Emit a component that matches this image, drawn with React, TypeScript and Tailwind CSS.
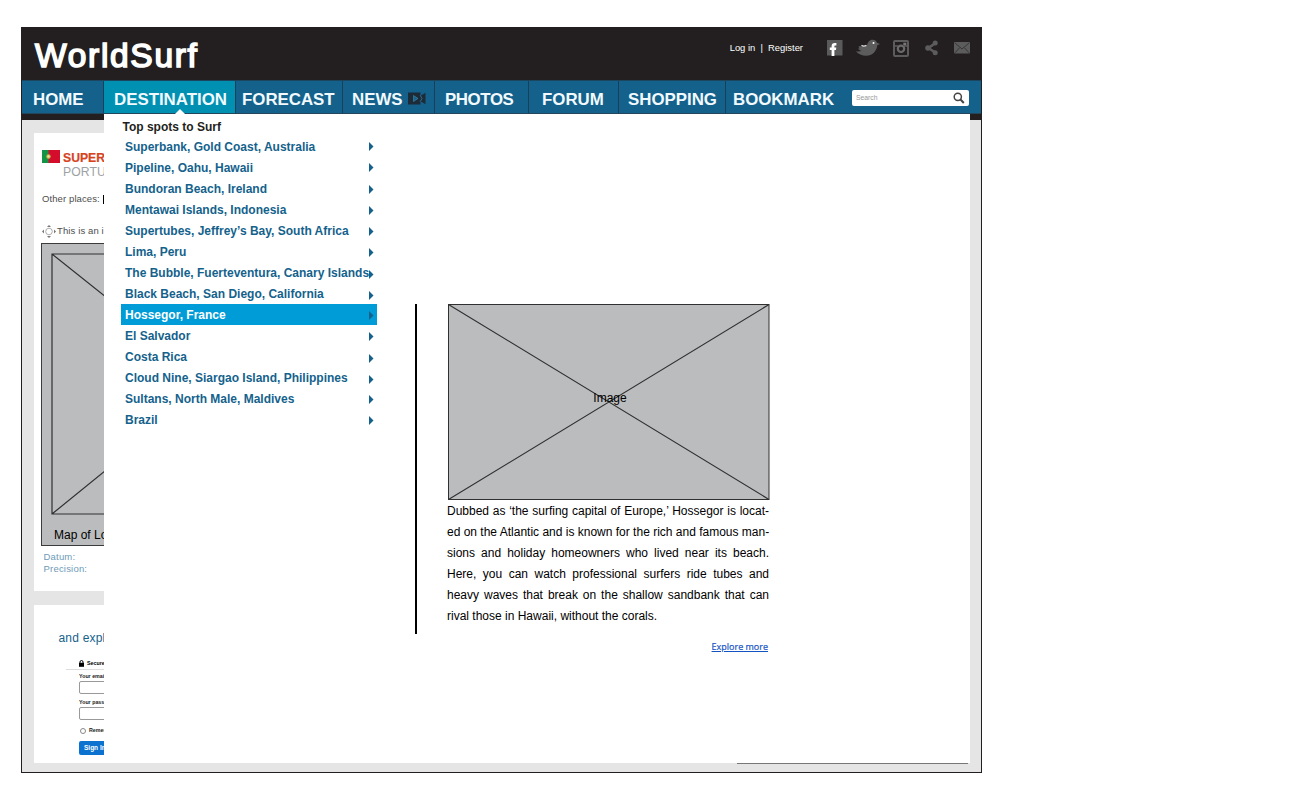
import React from "react";

type Spot = { name: string; active?: boolean; drop: string };

const spots: Spot[] = [
  { name: "Superbank, Gold Coast, Australia", drop: "mt-0" },
  { name: "Pipeline, Oahu, Hawaii", drop: "mt-0" },
  { name: "Bundoran Beach, Ireland", drop: "mt-px" },
  { name: "Mentawai Islands, Indonesia", drop: "mt-px" },
  { name: "Supertubes, Jeffrey’s Bay, South Africa", drop: "mt-px" },
  { name: "Lima, Peru", drop: "mt-[2px]" },
  { name: "The Bubble, Fuerteventura, Canary Islands", drop: "mt-[4px]" },
  { name: "Black Beach, San Diego, California", drop: "mt-[4px]" },
  { name: "Hossegor, France", active: true, drop: "mt-px" },
  { name: "El Salvador", drop: "mt-px" },
  { name: "Costa Rica", drop: "mt-[3px]" },
  { name: "Cloud Nine, Siargao Island, Philippines", drop: "mt-[3px]" },
  { name: "Sultans, North Male, Maldives", drop: "mt-[2px]" },
  { name: "Brazil", drop: "mt-[2px]" },
];

const story = [
  "Dubbed as ‘the surfing capital of Europe,’ Hossegor is locat-",
  "ed on the Atlantic and is known for the rich and famous man-",
  "sions and holiday homeowners who lived near its beach.",
  "Here, you can watch professional surfers ride tubes and",
  "heavy waves that break on the shallow sandbank that can",
];

function SocialIcons() {
  return (
    <div className="flex items-center">
      <svg className="h-4 w-4" viewBox="0 0 16 16">
        <rect width="15.5" height="15.5" fill="#5b5a5b" />
        <path d="M4.600 16V9.900H2.800V7.600h1.800V6.300c0-2.200 1.200-3.200 3.100-3.200h1.700v2.400H8.300c-.7 0-.9.3-.9.900v1.200h1.900L9 9.900H7.400V16z" fill="#fff" />
      </svg>
      <svg className="ml-[13px] h-[18px] w-[24px]" viewBox="0 0 24 18">
        <path d="M0 12.2c2.2.7 4.1.5 5.6-.4C3.9 11.5 2.600 10.700 2 9.500h1.600C2.900 8.600 2.600 7.800 2.600 7c2.900.4 5.600.3 8.500-.6C11.500 3.400 13.500.8 16.600.8c2.200 0 3.700 1.200 4.500 3L24 5.100l-2.700 1.100C20.800 12 16.500 16.700 10.200 16.700 6 16.700 2.200 15 0 12.200z" fill="#5d5c5d" />
        <path d="M5.500 6.300q2 1.500 5 0" stroke="#ddd" strokeWidth="1.300" fill="none" />
        <circle cx="17.500" cy="4" r="1" fill="#fff" />
      </svg>
      <svg className="ml-[13px] h-[17px] w-4" viewBox="0 0 16 17">
        <rect x="1" y="1" width="14" height="15" rx="1" fill="none" stroke="#5d5c5d" strokeWidth="2" />
        <path d="M1 6h4M11 6h4" stroke="#5d5c5d" strokeWidth="1.500" />
        <rect x="10.300" y="2.700" width="3" height="2.500" fill="#777" />
        <circle cx="8" cy="8.800" r="3.200" fill="none" stroke="#6b6a6b" strokeWidth="2.200" />
      </svg>
      <svg className="ml-4 h-4 w-[13px]" viewBox="0 0 13 16">
        <path d="M10.500 3L3.500 8l7 4.800" stroke="#5d5c5d" strokeWidth="2.600" fill="none" />
        <circle cx="10.200" cy="3" r="2.500" fill="#5d5c5d" />
        <circle cx="2.900" cy="8" r="2.700" fill="#5d5c5d" />
        <circle cx="10.200" cy="12.800" r="2.500" fill="#5d5c5d" />
      </svg>
      <svg className="ml-4 h-[12px] w-[16px]" viewBox="0 0 16 12">
        <rect width="16" height="11.500" rx="1" fill="#5d5c5d" />
        <path d="M1 1l7 6 7-6M1 10.800l4.500-5M15 10.800l-4.500-5" stroke="#333133" strokeWidth=".9" fill="none" />
      </svg>
    </div>
  );
}

function NavItem({ label, width, pad, active, children }: { label: string; width: string; pad: string; active?: boolean; children?: React.ReactNode }) {
  return (
    <div className={`flex h-full shrink-0 items-center whitespace-nowrap border-r border-[#1a3f58] pt-[6px] text-[16.85px] font-bold leading-none text-[#f2faff] ${width} ${pad} ${active ? "bg-[#0090b2]" : ""}`}>
      {label}
      {children}
    </div>
  );
}

function VideoIcon() {
  return (
    <svg className="-mt-[3px] ml-[5px] h-[13px] w-[19px]" viewBox="0 0 19 13">
      <path d="M0 .5h12.500v3.200L17.500.8v11.400l-5-3v3.300H0z" fill="#1d2b39" />
      <path d="M5.500 3.500l4.500 3-4.500 3z" fill="#14628c" stroke="#458baa" strokeWidth=".6" />
      <path d="M12.200 3.200l1.800 3.300M12.200 9.500l1.800-3" stroke="#3a7d9c" strokeWidth=".8" />
    </svg>
  );
}

function Sidebar() {
  return (
    <aside className="ml-[12px] flex w-[70px] flex-col overflow-hidden whitespace-nowrap pt-[13px]">
      <section className="h-[458px] bg-white pl-[8px] pt-[17px]">
        <div className="flex">
          <svg className="mr-[3px] h-[13px] w-[18px] shrink-0" viewBox="0 0 18 13">
            <rect width="18" height="13" fill="#d40d2c" />
            <rect width="6.500" height="13" fill="#159447" />
            <circle cx="6.500" cy="6.500" r="2.200" fill="#c9bd43" />
            <circle cx="6.500" cy="6.500" r="1" fill="#e9e3df" />
          </svg>
          <div className="text-[12.200px] leading-[13px]">
            <div className="pt-[2px] font-bold text-[#d6431f] [-webkit-text-stroke:0.2px_#d6431f]">SUPER</div>
            <div className="pt-px tracking-[0.100px] text-[#9da1a4]">PORTU</div>
          </div>
        </div>
        <div className="mt-[13px] flex h-[14px] items-center text-[9.500px] tracking-[0.100px] text-[#4d4d4d]">
          Other places:
          <span className="ml-[3px] h-[9px] w-[3px] shrink-0 bg-black" />
        </div>
        <div className="mt-[18px] flex h-[14px] items-center text-[9.500px] tracking-[0.120px] text-[#4d4d4d]">
          <svg className="mr-px h-[13px] w-[14px] shrink-0" viewBox="0 0 14 13">
            <circle cx="7" cy="6.500" r="3.300" fill="none" stroke="#999" strokeWidth=".8" />
            <path d="M5 2l2-2 2 2zM5 11l2 2 2-2zM2 4.500l-2 2 2 2zM12 4.500l2 2-2 2z" fill="#777" />
          </svg>
          This is an i
        </div>
        <div className="-ml-px mt-[5px] h-[303px] w-[90px] border-[1.500px] border-[#3b3b3c] bg-[#bbbcbe] pl-[9px] pt-[9px]">
          <svg className="h-[262px] w-[60px]" viewBox="0 0 60 262">
            <path d="M60 1H1v260h59M1 1l59 47M1 261l59-48" fill="none" stroke="#303030" strokeWidth="1.200" />
          </svg>
          <div className="ml-[3px] mt-[13px] text-[12px] leading-[15px] text-black">Map of Lo</div>
        </div>
        <div className="ml-[1.500px] mt-[5px] text-[9.500px] leading-[12px] tracking-[0.200px] text-[#6d9ab8]">
          <div>Datum:</div>
          <div>Precision:</div>
        </div>
      </section>
      <section className="mt-[14px] h-[158px] bg-white">
        <div className="ml-[24.500px] pt-[26px] text-[12px] leading-[15px] tracking-[0.200px] text-[#14628c]">and expl</div>
        <div className="ml-[32px] mt-[12px] flex h-[12px] items-center border-b border-[#ddd] pl-[13px] text-[5.300px] font-bold">
          <svg className="mr-[3px] h-[7px] w-[5px] shrink-0" viewBox="0 0 5 7">
            <path d="M1 3V2a1.500 1.500 0 013 0v1" fill="none" stroke="#000" />
            <rect y="2.800" width="5" height="4" fill="#000" />
          </svg>
          Secure
        </div>
        <div className="ml-[45px] text-[5.300px] font-bold text-[#222]">
          <div className="mt-px h-[10px] leading-[10px]">Your emai</div>
          <div className="h-[13px] w-[40px] rounded-[2px] border border-[#999]" />
          <div className="mt-[4px] h-[9px] leading-[9px]">Your pass</div>
          <div className="h-[13px] w-[40px] rounded-[2px] border border-[#999]" />
          <div className="mt-[6px] flex h-[9px] items-center">
            <span className="ml-px mr-[3px] h-[6px] w-[6px] shrink-0 rounded-full border border-[#888]" />
            Remem
          </div>
          <div className="mt-[6px] h-[14px] w-[40px] rounded-[2px] bg-[#0b72d0] pl-[5px] text-[6.500px] leading-[14px] text-white">Sign In</div>
        </div>
      </section>
    </aside>
  );
}

function Dropdown() {
  return (
    <div className="absolute left-[82px] top-0 flex h-[649px] w-[866px] bg-white">
      <svg className="absolute -top-[6px] left-[69px] h-[7px] w-[14px]" viewBox="0 0 14 7">
        <path d="M1 7l6-6 6 6z" fill="#fff" />
      </svg>
      <div className="ml-[17px] w-[256px] pt-[5px]">
        <h2 className="pl-[1.500px] text-[12px] font-bold leading-[17px] text-[#231f20]">Top spots to Surf</h2>
        <ul>
          {spots.map((s) => (
            <li key={s.name} className={`flex h-[21px] items-center whitespace-nowrap pl-[4px] text-[12px] font-bold leading-[21px] ${s.active ? "bg-[#009cd8] text-white" : "text-[#14628c]"}`}>
              <span className="mt-[2px] w-[244px]">{s.name}</span>
              <svg className={`h-[9px] w-[5px] shrink-0 ${s.drop}`} viewBox="0 0 5 9">
                <path d="M0 0l4.500 4.500L0 9z" fill="#14628c" />
              </svg>
            </li>
          ))}
        </ul>
      </div>
      <div className="ml-[38px] mt-[190px] h-[330px] w-[2px] bg-black" />
      <article className="ml-[30px] mt-[190px] w-[323px]">
        <div className="relative h-[196px] w-[323px]">
          <svg className="h-[196px] w-[323px]" viewBox="0 0 323 196">
            <rect x="1.500" y=".5" width="320.500" height="195" fill="#bbbcbe" stroke="#303030" />
            <path d="M1.500.5l320.500 195M322 .5l-320.500 195" stroke="#303030" strokeWidth="1.100" />
          </svg>
          <span className="absolute inset-0 flex items-center justify-center pb-[8px] pl-[3px] text-[12px] text-black">Image</span>
        </div>
        <div className="w-[322px] pt-px text-[12px] leading-[21px] text-black">
          {story.map((line) => (
            <div key={line} className="h-[21px] whitespace-nowrap [text-align-last:justify]">{line}</div>
          ))}
          <div>rival those in Hawaii, without the corals.</div>
        </div>
        <a className="mr-[2px] mt-[13px] block text-right font-['Open_Sans',sans-serif] text-[9px] leading-[14px] text-[#1453c4] underline [-webkit-text-stroke:0.2px_#1453c4]">Explore more</a>
      </article>
    </div>
  );
}

export default function App() {
  return (
    <div className="h-[791px] w-[1300px] overflow-hidden bg-white pl-[21px] pt-[27px] font-['Liberation_Sans',Arial,sans-serif]">
      <div className="flex h-[746px] w-[961px] flex-col border border-[#231f20] bg-[#e5e5e5]">
        <header className="flex h-[52px] shrink-0 justify-between bg-[#231f20]">
          <h1 className="pl-[13px] pt-[8px] text-[33.500px] leading-[40px] tracking-[1.700px] text-white [-webkit-text-stroke:1.600px_white]">WorldSurf</h1>
          <div className="flex pr-[11px]">
            <div className="mr-[24px] pt-[13px] text-[9.400px] leading-[14px] text-white">
              Log in &nbsp;|&nbsp; Register
            </div>
            <div className="pt-[11px]"><SocialIcons /></div>
          </div>
        </header>
        <nav className="flex h-[34px] shrink-0 items-center border-b border-t border-b-[#23465c] border-t-[#1c465f] bg-[#14628c]">
          <NavItem label="HOME" width="w-[82px]" pad="pl-[11px]" />
          <NavItem label="DESTINATION" width="w-[132px]" pad="pl-[10px]" active />
          <NavItem label="FORECAST" width="w-[107px]" pad="pl-[6px]" />
          <NavItem label="NEWS" width="w-[92px]" pad="pl-[9px]"><VideoIcon /></NavItem>
          <NavItem label="PHOTOS" width="w-[94px]" pad="pl-[10px] tracking-[-0.400px]" />
          <NavItem label="FORUM" width="w-[90px]" pad="pl-[13px]" />
          <NavItem label="SHOPPING" width="w-[107px]" pad="pl-[9px]" />
          <div className="w-[126px] pl-[7px] pt-[6px] text-[16.85px] font-bold leading-none text-[#f2faff]">BOOKMARK</div>
          <div className="mt-px flex h-[16px] w-[117px] items-center justify-between rounded-[2px] bg-white pl-[4px] pr-[4px] pt-px text-[6.800px] text-[#999]">
            Search
            <svg className="h-[12px] w-[12px]" viewBox="0 0 12 12">
              <circle cx="4.800" cy="4.800" r="3.600" fill="none" stroke="#444" strokeWidth="1.500" />
              <path d="M7.500 7.500l3.300 3.500" stroke="#444" strokeWidth="2" />
            </svg>
          </div>
        </nav>
        <main className="relative flex grow flex-col">
          <div className="h-[6px] shrink-0 bg-[#231f20]" />
          <Sidebar />
          <div className="ml-[715px] h-px w-[231px] bg-[#777]" />
          <Dropdown />
        </main>
      </div>
    </div>
  );
}
